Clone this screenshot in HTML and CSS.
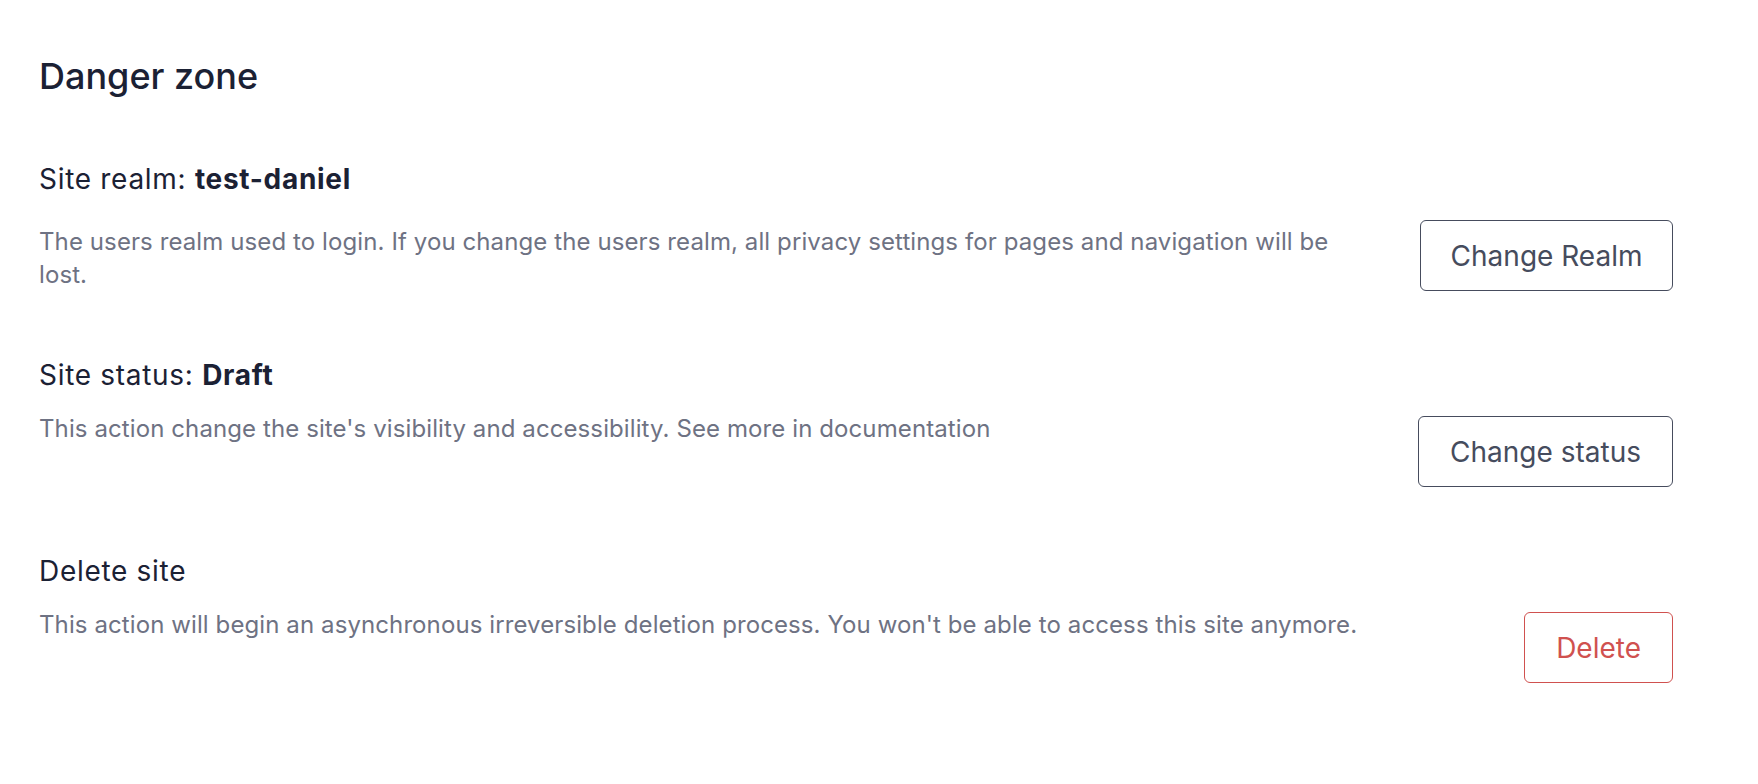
FILE: index.html
```html
<!DOCTYPE html>
<html lang="en">
<head>
<meta charset="utf-8">
<title>Danger zone</title>
<link rel="stylesheet" href="styles.css">
</head>
<body>
<main class="page">
  <h1 class="heading">Danger zone</h1>
  <section class="rows">
    <div class="row">
      <div class="info">
        <h2 class="title">Site realm: <strong>test-daniel</strong></h2>
        <p class="desc desc-first">The users realm used to login. If you change the users realm, all privacy settings for pages and navigation will be lost.</p>
      </div>
      <button class="btn btn-realm">Change Realm</button>
    </div>
    <div class="row">
      <div class="info">
        <h2 class="title">Site status: <strong>Draft</strong></h2>
        <p class="desc">This action change the site's visibility and accessibility. See more in documentation</p>
      </div>
      <button class="btn">Change status</button>
    </div>
    <div class="row">
      <div class="info">
        <h2 class="title">Delete site</h2>
        <p class="desc">This action will begin an asynchronous irreversible deletion process. You won't be able to access this site anymore.</p>
      </div>
      <button class="btn btn-danger">Delete</button>
    </div>
  </section>
</main>
</body>
</html>
```

FILE: styles.css
```css
html, body {
  margin: 0;
  background: #ffffff;
}
body {
  font-family: Inter, "Noto Sans", sans-serif;
  color: #1b2134;
}
.page {
  padding: 54px 85px 0 39px;
}
.heading {
  margin: 0;
  font-size: 36px;
  line-height: 44px;
  font-weight: 500;
  color: #1b2134;
}
.rows {
  margin-top: 63px;
  display: flex;
  flex-direction: column;
  gap: 66px;
}
.row {
  display: flex;
  align-items: flex-start;
  justify-content: space-between;
  gap: 36px;
  min-height: 130px;
}
.info {
  flex: 1;
}
.title {
  margin: 0;
  font-size: 28px;
  line-height: 36px;
  font-weight: 400;
  letter-spacing: 0.7px;
  color: #1b2134;
}
.title strong {
  font-weight: 700;
}
.desc {
  margin: 19px 0 0;
  font-size: 24px;
  line-height: 33px;
  letter-spacing: 0.1px;
  color: #6e7283;
}
.desc-first {
  margin-top: 28px;
  max-width: 1305px;
}
.btn {
  margin-top: 59px;
  height: 71px;
  padding: 0 31px;
  border: 1.5px solid #464c5d;
  border-radius: 6px;
  background: #ffffff;
  color: #464c5d;
  font-family: inherit;
  font-size: 28px;
  font-weight: 400;
  white-space: nowrap;
  cursor: pointer;
}
.btn-realm {
  padding: 0 29.5px;
}
.btn-danger {
  border-color: #d0514f;
  color: #d0514f;
}
```
